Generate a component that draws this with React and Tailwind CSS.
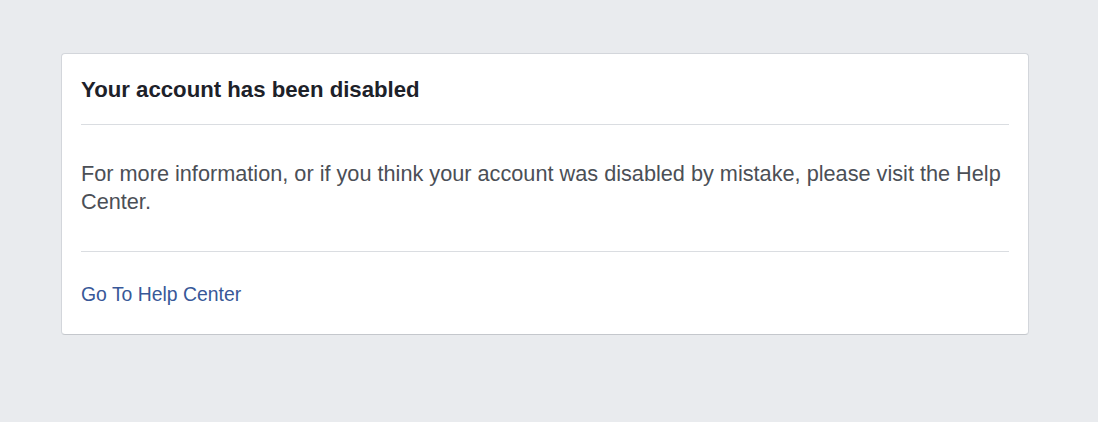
import React from "react";

export default function App() {
  return (
    <div className="min-h-screen bg-[#e9ebee] pt-[53px] px-[61px]" style={{ fontFamily: '"Liberation Sans", Arial, sans-serif' }}>
      <div className="w-[968px] bg-white border border-[#d3d6db] border-b-[#c4c7cc] rounded-[4px] px-[19px]">
        <div className="pt-[23px] pb-[21px] border-b border-[#dadde1]">
          <h2 className="text-[22.2px] leading-[26px] font-bold text-[#1d2129]">Your account has been disabled</h2>
        </div>
        <div className="pt-[35px] pb-[35px] border-b border-[#dadde1]">
          <p className="text-[21.7px] leading-[28px] text-[#4b4f56]">
            For more information, or if you think your account was disabled by mistake, please visit the Help Center.
          </p>
        </div>
        <div className="pt-[30px] pb-[28px]">
          <a href="#" className="block text-[19.4px] leading-[24px] text-[#385898]">Go To Help Center</a>
        </div>
      </div>
    </div>
  );
}
